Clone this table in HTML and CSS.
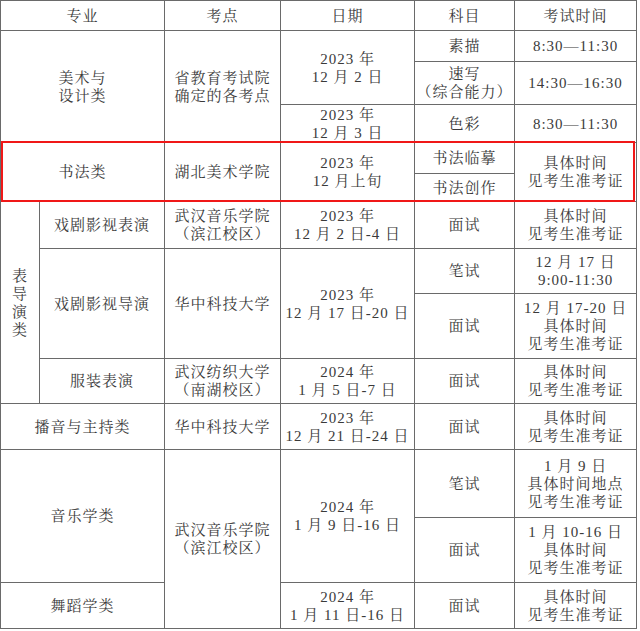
FILE: index.html
```html
<!DOCTYPE html>
<html lang="zh-CN">
<head>
<meta charset="utf-8">
<title>考试安排</title>
<link rel="stylesheet" href="styles.css">
</head>
<body>
<div class="wrap">
<table class="sched">
<colgroup>
<col class="c0"><col class="c1"><col class="c2"><col class="c3"><col class="c4"><col class="c5">
</colgroup>
<tr class="h30">
<td colspan="2">专业</td><td>考点</td><td>日期</td><td>科目</td><td>考试时间</td>
</tr>
<tr class="h31">
<td colspan="2" rowspan="3">美术与<br>设计类</td>
<td rowspan="3">省教育考试院<br>确定的各考点</td>
<td rowspan="2">2023 年<br>12 月 2 日</td>
<td>素描</td><td>8:30—11:30</td>
</tr>
<tr class="h43">
<td>速写<br>（综合能力）</td><td>14:30—16:30</td>
</tr>
<tr class="h38">
<td>2023 年<br>12 月 3 日</td><td>色彩</td><td>8:30—11:30</td>
</tr>
<tr class="h31">
<td colspan="2" rowspan="2">书法类</td>
<td rowspan="2">湖北美术学院</td>
<td rowspan="2">2023 年<br>12 月上旬</td>
<td>书法临摹</td>
<td rowspan="2">具体时间<br>见考生准考证</td>
</tr>
<tr class="h28">
<td>书法创作</td>
</tr>
<tr class="h47">
<td rowspan="4" class="vert">表<br>导<br>演<br>类</td>
<td>戏剧影视表演</td>
<td>武汉音乐学院<br>（滨江校区）</td>
<td>2023 年<br>12 月 2 日-4 日</td>
<td>面试</td>
<td>具体时间<br>见考生准考证</td>
</tr>
<tr class="h45">
<td rowspan="2">戏剧影视导演</td>
<td rowspan="2">华中科技大学</td>
<td rowspan="2">2023 年<br>12 月 17 日-20 日</td>
<td>笔试</td>
<td>12 月 17 日<br>9:00-11:30</td>
</tr>
<tr class="h65">
<td>面试</td>
<td>12 月 17-20 日<br>具体时间<br>见考生准考证</td>
</tr>
<tr class="h45">
<td>服装表演</td>
<td>武汉纺织大学<br>（南湖校区）</td>
<td>2024 年<br>1 月 5 日-7 日</td>
<td>面试</td>
<td>具体时间<br>见考生准考证</td>
</tr>
<tr class="h46">
<td colspan="2">播音与主持类</td>
<td>华中科技大学</td>
<td>2023 年<br>12 月 21 日-24 日</td>
<td>面试</td>
<td>具体时间<br>见考生准考证</td>
</tr>
<tr class="h68">
<td colspan="2" rowspan="2">音乐学类</td>
<td rowspan="3">武汉音乐学院<br>（滨江校区）</td>
<td rowspan="2">2024 年<br>1 月 9 日-16 日</td>
<td>笔试</td>
<td>1 月 9 日<br>具体时间地点<br>见考生准考证</td>
</tr>
<tr class="h65">
<td>面试</td>
<td>1 月 10-16 日<br>具体时间<br>见考生准考证</td>
</tr>
<tr class="h46">
<td colspan="2">舞蹈学类</td>
<td>2024 年<br>1 月 11 日-16 日</td>
<td>面试</td>
<td>具体时间<br>见考生准考证</td>
</tr>
</table>
<div class="highlight"></div>
</div>
</body>
</html>
```
FILE: styles.css
```css
html, body {
  margin: 0;
  padding: 0;
  background: #ffffff;
}
.wrap {
  position: relative;
  width: 640px;
  height: 631px;
}
.sched {
  border-collapse: collapse;
  table-layout: fixed;
  width: 637px;
  font-family: "Liberation Serif", "Noto Serif CJK SC", "Noto Sans CJK SC", serif;
  font-size: 15px;
  line-height: 18px;
  letter-spacing: 1px;
  color: #3a3a3a;
}
.sched td {
  border: 1px solid #6a6a6a;
  padding: 0;
  text-align: center;
  vertical-align: middle;
}
.c0 { width: 39px; }
.c1 { width: 125px; }
.c2 { width: 116px; }
.c3 { width: 134px; }
.c4 { width: 100px; }
.c5 { width: 122px; }
.h28 { height: 28px; }
.h30 { height: 30px; }
.h31 { height: 31px; }
.h38 { height: 38px; }
.h43 { height: 43px; }
.h45 { height: 45px; }
.h46 { height: 46px; }
.h47 { height: 47px; }
.h65 { height: 65px; }
.h68 { height: 68px; }
.highlight {
  position: absolute;
  left: 1px;
  top: 141px;
  width: 630px;
  height: 57px;
  border: 2px solid #f01818;
}
```
